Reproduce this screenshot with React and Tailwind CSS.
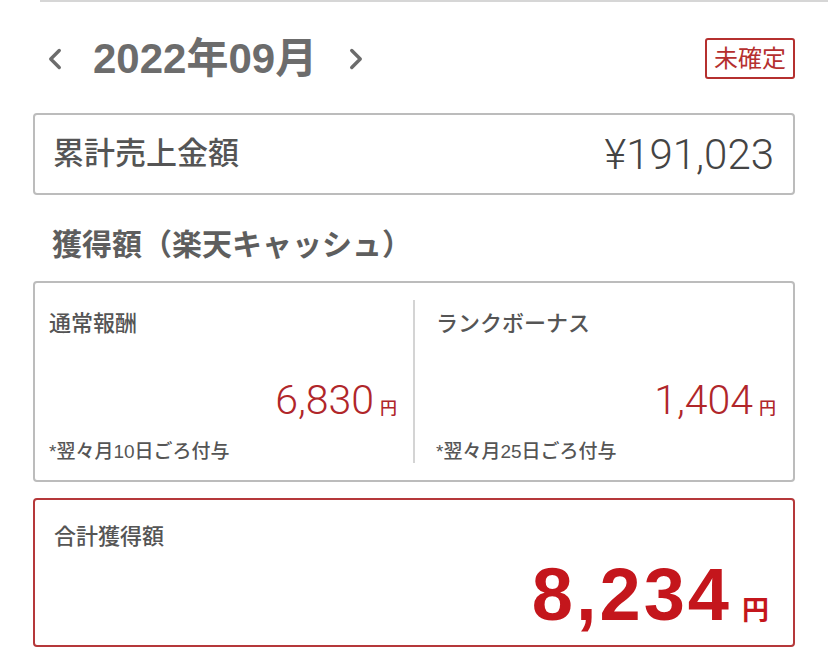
import { ChevronLeft, ChevronRight } from "lucide-react";

const jp = "font-['Liberation_Sans','Noto_Sans_CJK_JP',sans-serif]";
const num = "font-['Roboto','Liberation_Sans',sans-serif]";

function RewardColumn({ title, amount, note, divider }) {
  return (
    <div
      className={`flex flex-col ${
        divider ? "flex-1 border-l-2 border-[#d4d4d4] pl-[21px] pr-[17px]" : "w-[378px] pl-[14px] pr-[16px]"
      }`}
    >
      <div className={`${jp} text-[22px] leading-[28px] mt-[10px] text-[#555] font-medium`}>{title}</div>
      <div className="flex items-baseline justify-end mt-[40px]">
        <span className={`${num} font-light text-[41px] leading-[44px] text-[#b0262a]`}>{amount}</span>
        <span className={`${jp} text-[17px] ml-[6px] text-[#b0262a] font-medium`}>円</span>
      </div>
      <div className={`${jp} text-[19px] leading-[24px] mt-[18px] text-[#555] font-medium`}>{note}</div>
    </div>
  );
}

export default function App() {
  return (
    <div className={`w-[828px] h-[657px] bg-white overflow-hidden ${jp}`}>
      {/* top divider */}
      <div className="ml-[40px] h-[2px] bg-[#d6d6d6]" />

      <div className="px-[33px]">
        {/* month header */}
        <div className="flex items-center justify-between mt-[35px] h-[43px]">
          <div className="flex items-center text-[#6c6c6c]">
            <ChevronLeft size={34} strokeWidth={2.4} className="ml-[5px]" />
            <span className={`${jp} font-bold text-[42px] leading-none ml-[21px]`}>2022年09月</span>
            <ChevronRight size={34} strokeWidth={2.4} className="ml-[22px]" />
          </div>
          <div className="border-2 border-[#b5302f] rounded-[3px] px-[7px] h-[41px] flex items-center text-[24px] text-[#b5302f]">
            未確定
          </div>
        </div>

        {/* total sales */}
        <div className="mt-[33px] h-[82px] border-2 border-[#bcbcbc] rounded-[4px] flex items-center justify-between pl-[18px] pr-[19px]">
          <span className="text-[31px] font-medium text-[#555]">累計売上金額</span>
          <span className={`${num} font-light text-[42px] text-[#444]`}>¥191,023</span>
        </div>

        {/* earnings heading */}
        <div className="mt-[30px] pl-[19px] text-[30px] leading-[40px] font-bold text-[#5e5e5e]">
          獲得額（楽天キャッシュ）
        </div>

        {/* breakdown */}
        <div className="mt-[16px] h-[201px] border-2 border-[#bcbcbc] rounded-[4px] flex py-[17px]">
          <RewardColumn title="通常報酬" amount="6,830" note="*翌々月10日ごろ付与" />
          <RewardColumn title="ランクボーナス" amount="1,404" note="*翌々月25日ごろ付与" divider />
        </div>

        {/* total earnings */}
        <div className="mt-[16px] h-[149px] border-2 border-[#b5383a] rounded-[4px] pl-[19px] pr-[24px] flex flex-col">
          <div className="text-[22px] leading-[28px] mt-[23px] text-[#555] font-medium">合計獲得額</div>
          <div className="flex items-baseline justify-end mt-[4px]">
            <span className="font-['Liberation_Sans',sans-serif] font-bold text-[74px] leading-[80px] text-[#c4161c] tracking-[3px]">
              8,234
            </span>
            <span className="text-[27px] font-bold ml-[10px] text-[#c4161c]">円</span>
          </div>
        </div>
      </div>
    </div>
  );
}
